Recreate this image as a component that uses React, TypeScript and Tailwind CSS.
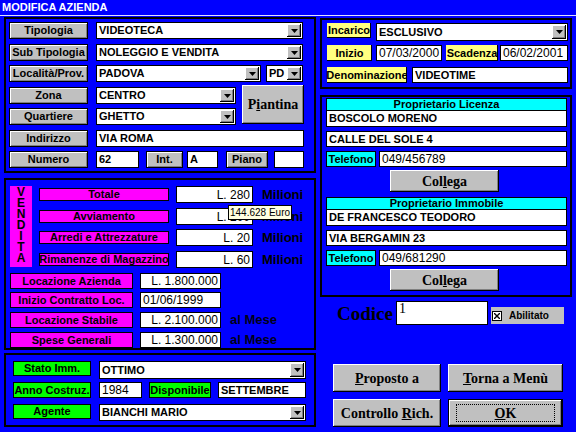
import React from "react";

const sans = "font-['Liberation_Sans',Arial,sans-serif]";
const serif = "font-['Liberation_Serif','Times_New_Roman',serif]";
const bevel = "bg-[#c0c0c0] shadow-[inset_-1px_-1px_0_#000,inset_1px_1px_0_#fff,inset_-2px_-2px_0_#808080]";

type P = { className?: string; children?: React.ReactNode };

function Lbl({ className = "", children }: P) {
  return (
    <div className={"flex shrink-0 items-center justify-center whitespace-nowrap border border-black text-[11px] font-bold leading-none text-black " + className}>
      {children}
    </div>
  );
}

function Field({ className = "", children }: P) {
  return (
    <div className={"flex shrink-0 items-center whitespace-nowrap border border-black bg-white px-[2px] text-[11px] font-bold leading-none text-black " + className}>
      {children}
    </div>
  );
}

function Arrow() {
  return (
    <div className={"ml-auto flex h-[calc(100%-2px)] w-[14px] shrink-0 items-center justify-center " + bevel}>
      <svg width="7" height="4" viewBox="0 0 7 4">
        <path d="M0 0h7L3.5 4z" fill="#000" />
      </svg>
    </div>
  );
}

function Combo({ className = "", children }: P) {
  return (
    <div className={"flex shrink-0 items-center whitespace-nowrap border border-black bg-white pl-[2px] pr-[1px] text-[11px] font-bold leading-none text-black " + className}>
      <span>{children}</span>
      <Arrow />
    </div>
  );
}

function Btn({ className = "", children }: P) {
  return (
    <div className={"flex shrink-0 items-center justify-center whitespace-pre text-[14px] font-bold text-black " + serif + " " + bevel + " " + className}>
      {children}
    </div>
  );
}

const gray = "bg-[#c0c0c0] shadow-[inset_1px_1px_0_#fff,inset_-1px_-1px_0_#808080]";
const mag = "bg-[#ff00ff]";
const grn = "bg-[#00ff00]";
const yel = "bg-[#ffff80] border-0 shadow-[inset_-1px_-1px_0_#000]";
const cyan = "bg-[#00ffff]";

export default function App() {
  return (
    <div className={"h-[432px] w-[576px] overflow-hidden bg-[#0000ff] " + sans}>
      <div className="flex h-[16px] items-center border-b border-[#e0e0ff] pl-[2px] text-[11px] font-bold text-white">
        MODIFICA AZIENDA
      </div>

      <div className="flex">
        {/* left column */}
        <div className="ml-[4px] mt-[1px] w-[312px]">
          {/* dati immobile */}
          <div className="h-[156px] border-2 border-black px-[3px] pt-[3px]">
            <div className="flex h-[17px]">
              <Lbl className={"w-[79px] " + gray}>Tipologia</Lbl>
              <Combo className="ml-[8px] w-[207px]">VIDEOTECA</Combo>
            </div>
            <div className="mt-[5px] flex h-[17px]">
              <Lbl className={"w-[79px] " + gray}>Sub Tipologia</Lbl>
              <Combo className="ml-[8px] w-[207px]">NOLEGGIO E VENDITA</Combo>
            </div>
            <div className="mt-[4px] flex h-[17px]">
              <Lbl className={"w-[79px] " + gray}>Località/Prov.</Lbl>
              <Combo className="ml-[8px] w-[165px]">PADOVA</Combo>
              <Combo className="ml-[5px] w-[37px]">PD</Combo>
            </div>
            <div className="mt-[5px] flex">
              <div>
                <div className="flex h-[17px]">
                  <Lbl className={"w-[79px] " + gray}>Zona</Lbl>
                  <Combo className="ml-[8px] w-[140px]">CENTRO</Combo>
                </div>
                <div className="mt-[4px] flex h-[17px]">
                  <Lbl className={"w-[79px] " + gray}>Quartiere</Lbl>
                  <Combo className="ml-[8px] w-[140px]">GHETTO</Combo>
                </div>
              </div>
              <Btn className="-mt-[2px] ml-[6px] h-[39px] w-[62px]">
                <span>
                  P<span className="underline">i</span>antina
                </span>
              </Btn>
            </div>
            <div className="mt-[5px] flex h-[17px]">
              <Lbl className={"w-[79px] " + gray}>Indirizzo</Lbl>
              <Field className="ml-[8px] w-[208px]">VIA ROMA</Field>
            </div>
            <div className="mt-[4px] flex h-[17px]">
              <Lbl className={"w-[79px] " + gray}>Numero</Lbl>
              <Field className="ml-[8px] w-[43px]">62</Field>
              <Lbl className={"ml-[7px] w-[37px] " + gray}>Int.</Lbl>
              <Field className="ml-[4px] w-[31px]">A</Field>
              <Lbl className={"ml-[8px] w-[42px] " + gray}>Piano</Lbl>
              <Field className="ml-[6px] w-[30px]"></Field>
            </div>
          </div>

          {/* vendita */}
          <div className="relative mt-[5px] h-[172px] border-2 border-black pl-[4px] pt-[6px]">
            <div className="flex">
              <div className={"flex h-[81px] w-[22px] flex-col items-center pt-[1px] text-[12px] font-bold leading-[11px] text-black " + mag}>
                {"VENDITA".split("").map((c, i) => (
                  <span key={i}>{c}</span>
                ))}
              </div>
              <div className="ml-[7px]">
                {[
                  ["Totale", "L. 280"],
                  ["Avviamento", "L. 200"],
                  ["Arredi e Attrezzature", "L. 20"],
                  ["Rimanenze di Magazzino", "L. 60"],
                ].map(([l, v], i) => (
                  <div key={l} className={"flex h-[17px] items-center " + (i === 0 ? "" : i === 2 ? "mt-[4px]" : "mt-[5px]")}>
                    <Lbl className={"w-[130px] " + mag}>{l}</Lbl>
                    <Field className="ml-[7px] h-full w-[77px] justify-end text-[12px] font-normal">{v}</Field>
                    <span className="ml-[9px] text-[13px] font-bold text-black">Milioni</span>
                  </div>
                ))}
              </div>
            </div>
            {[
              ["Locazione Azienda", "L. 1.800.000", "", "mt-[5px]"],
              ["Inizio Contratto Loc.", "01/06/1999", "", "mt-[3px]"],
              ["Locazione Stabile", "L. 2.100.000", "al Mese", "mt-[4px]"],
              ["Spese Generali", "L. 1.300.000", "al Mese", "mt-[4px]"],
            ].map(([l, v, t, m]) => (
              <div key={l} className={"flex h-[16px] items-center " + m}>
                <Lbl className={"h-full w-[123px] " + mag}>{l}</Lbl>
                <Field className={"ml-[7px] h-full w-[81px] text-[12px] font-normal " + (v.startsWith("L.") ? "justify-end" : "")}>{v}</Field>
                <span className="ml-[9px] text-[13px] font-bold text-[#000018]">{t}</span>
              </div>
            ))}
            <div className="absolute left-[222px] top-[25px] h-[15px] border border-black bg-[#ffffe1] px-[1px] pt-[1px] text-[10px] leading-[11px] text-black">
              144.628 Euro
            </div>
          </div>

          {/* stato */}
          <div className="mt-[3px] h-[74px] border-2 border-black pl-[7px] pt-[6px]">
            <div className="flex h-[18px]">
              <Lbl className={"h-[15px] w-[78px] " + grn}>Stato Imm.</Lbl>
              <Combo className="ml-[8px] w-[207px]">OTTIMO</Combo>
            </div>
            <div className="mt-[3px] flex h-[16px]">
              <Lbl className={"w-[78px] " + grn}>Anno Costruz.</Lbl>
              <Field className="ml-[8px] w-[43px] font-normal text-[12px]">1984</Field>
              <Lbl className={"ml-[7px] w-[62px] " + grn}>Disponibile</Lbl>
              <Field className="ml-[7px] w-[88px]">SETTEMBRE</Field>
            </div>
            <div className="mt-[6px] flex h-[17px]">
              <Lbl className={"h-[15px] w-[78px] " + grn}>Agente</Lbl>
              <Combo className="ml-[8px] w-[207px]">BIANCHI MARIO</Combo>
            </div>
          </div>
        </div>

        {/* right column */}
        <div className="ml-[4px] mt-[2px] w-[252px]">
          <div className="h-[71px] border-2 border-black pl-[5px] pt-[3px]">
            <div className="flex h-[18px]">
              <Lbl className={"h-[15px] w-[44px] " + yel}>Incarico</Lbl>
              <Combo className="ml-[5px] w-[192px]">ESCLUSIVO</Combo>
            </div>
            <div className="mt-[4px] flex h-[16px]">
              <Lbl className={"w-[45px] " + yel}>Inizio</Lbl>
              <Field className="ml-[4px] w-[66px] font-normal text-[12px]">07/03/2000</Field>
              <Lbl className={"ml-[4px] w-[52px] " + yel}>Scadenza</Lbl>
              <Field className="ml-[2px] w-[68px] font-normal text-[12px]">06/02/2001</Field>
            </div>
            <div className="mt-[6px] flex h-[16px]">
              <Lbl className={"w-[80px] " + yel}>Denominazione</Lbl>
              <Field className="ml-[5px] w-[156px]">VIDEOTIME</Field>
            </div>
          </div>

          <div className="mt-[6px] h-[202px] border-2 border-black pl-[4px] pt-[1px]">
            {[
              ["Proprietario Licenza", "BOSCOLO MORENO", "CALLE DEL SOLE 4", "049/456789"],
              ["Proprietario Immobile", "DE FRANCESCO TEODORO", "VIA BERGAMIN 23", "049/681290"],
            ].map(([h, n, a, t], i) => (
              <div key={h} className={i === 1 ? "mt-[5px]" : ""}>
                <div className={"flex h-[12px] w-[241px] items-center justify-center border-x border-t border-black text-[11px] font-bold leading-none text-black " + cyan}>
                  {h}
                </div>
                <Field className="h-[17px] w-[241px]">{n}</Field>
                <Field className="mt-[4px] h-[16px] w-[241px]">{a}</Field>
                <div className="mt-[4px] flex h-[16px]">
                  <Lbl className={"w-[50px] " + cyan}>Telefono</Lbl>
                  <Field className="ml-[3px] w-[188px] font-normal text-[12px]">{t}</Field>
                </div>
                <Btn className="ml-[64px] mt-[3px] h-[22px] w-[109px]">
                  <span>
                    Col<span className="underline">l</span>ega
                  </span>
                </Btn>
              </div>
            ))}
          </div>

          <div className="mt-[4px] flex items-start pl-[17px]">
            <span className={"mt-[3px] text-[19px] font-bold leading-none text-black " + serif}>Codice</span>
            <div className={"ml-[3px] h-[24px] w-[92px] border border-black bg-white pl-[2px] text-[14px] leading-[14px] text-black " + serif}>1</div>
            <div className="ml-[3px] mt-[6px] flex h-[17px] w-[73px] items-center bg-[#c0c0c0] pl-[1px]">
              <div className="flex h-[10px] w-[10px] items-center justify-center border border-black bg-white">
                <svg width="6" height="6" viewBox="0 0 6 6">
                  <path d="M0 0L6 6M6 0L0 6" stroke="#000" strokeWidth="1.4" />
                </svg>
              </div>
              <span className="ml-[7px] text-[10px] font-bold text-black">Abilitato</span>
            </div>
          </div>

          <div className="mt-[39px] flex pl-[13px]">
            <Btn className="h-[28px] w-[108px]">
              <span>
                <span className="underline">P</span>roposto a
              </span>
            </Btn>
            <Btn className="ml-[7px] h-[28px] w-[115px]">
              <span>
                <span className="underline">T</span>orna a Menù
              </span>
            </Btn>
          </div>
          <div className="mt-[7px] flex pl-[13px]">
            <Btn className="h-[28px] w-[108px]">
              <span>
                Controllo <span className="underline">R</span>ich.
              </span>
            </Btn>
            <div className="ml-[7px] h-[28px] w-[115px] border border-black">
              <Btn className="h-full w-full">
                <div className="flex h-[18px] w-[99px] items-center justify-center border border-dotted border-black">
                  <span>
                    <span className="underline">O</span>K
                  </span>
                </div>
              </Btn>
            </div>
          </div>
        </div>
      </div>
    </div>
  );
}
